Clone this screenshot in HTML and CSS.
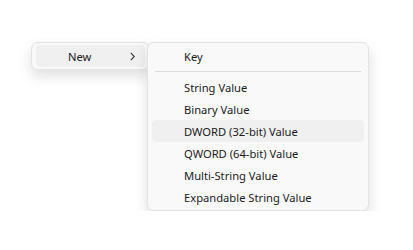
FILE: index.html
```html
<!DOCTYPE html>
<html lang="en">
<head>
  <meta charset="UTF-8" />
  <title>New menu</title>
  <link rel="stylesheet" href="styles.css">
</head>
<body>

  <div class="menus">
    <!-- Menu principal -->
    <div class="menu menu-main">
      <div class="item activo">
        <span class="label">New</span>
        <svg class="chevron" width="5" height="9" viewBox="0 0 5 9"><path d="M0.8 0.8 L4.3 4.5 L0.8 8.2" fill="none" stroke="#333" stroke-width="1.1"/></svg>
      </div>
    </div>

    <!-- Submenu -->
    <div class="menu menu-sub">
      <div class="item">Key</div>
      <div class="separador"></div>
      <div class="item">String Value</div>
      <div class="item">Binary Value</div>
      <div class="item hover">DWORD (32-bit) Value</div>
      <div class="item">QWORD (64-bit) Value</div>
      <div class="item">Multi-String Value</div>
      <div class="item">Expandable String Value</div>
    </div>
  </div>

</body>
</html>
```

FILE: styles.css
```css
body {
  margin: 0;
  padding: 42px 0 0 31px;
  background: #fff;
  font-family: 'Noto Sans', sans-serif;
  font-size: 11.2px;
  color: #1b1b1b;
}

.menus {
  display: flex;
  align-items: flex-start;
}

.menu {
  box-sizing: border-box;
  background: #f9f9f9;
  border: 1px solid #e3e3e3;
  border-radius: 7px;
  padding: 2px 4px;
  box-shadow: 0 6px 14px rgba(0, 0, 0, 0.13);
}

.menu-main {
  width: 119px;
}

/* Submenu encima del menu principal */
.menu-sub {
  width: 222px;
  margin-left: -3px;
  position: relative;
}

.item {
  height: 22px;
  display: flex;
  align-items: center;
  padding-left: 32px;
  border-radius: 4px;
  white-space: nowrap;
}

.activo {
  background: #f0f0f0;
  justify-content: space-between;
  padding-right: 10px;
}

.hover {
  background: #f0f0f0;
}

.separador {
  height: 1px;
  background: #dcdcdc;
  margin: 4px 3px;
}
```
